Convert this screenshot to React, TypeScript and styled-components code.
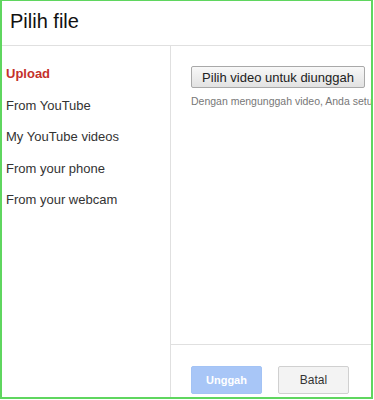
import styled, { createGlobalStyle } from "styled-components";

const GlobalStyle = createGlobalStyle`
  html, body {
    margin: 0;
    padding: 0;
    background: #fff;
  }
  body {
    font-family: "Liberation Sans", Arial, sans-serif;
  }
`;

const sources = [
  "Upload",
  "From YouTube",
  "My YouTube videos",
  "From your phone",
  "From your webcam",
];

export default function App() {
  return (
    <>
      <GlobalStyle />
      <Frame>
        <Header>
          <Title>Pilih file</Title>
        </Header>
        <Body>
          <Sidebar>
            {sources.map((s, i) => (
              <NavItem key={s} $active={i === 0}>
                {s}
              </NavItem>
            ))}
          </Sidebar>
          <Main>
            <Content>
              <PickButton>Pilih video untuk diunggah</PickButton>
              <Note>Dengan mengunggah video, Anda setuju</Note>
            </Content>
            <Footer>
              <UploadBtn disabled>Unggah</UploadBtn>
              <CancelBtn>Batal</CancelBtn>
            </Footer>
          </Main>
        </Body>
      </Frame>
    </>
  );
}

const Frame = styled.div`
  box-sizing: border-box;
  width: 373px;
  height: 399px;
  border: 2px solid #5fd65f;
  border-top-width: 1px;
  display: flex;
  flex-direction: column;
  overflow: hidden;
`;

const Header = styled.div`
  height: 44px;
  border-bottom: 1px solid #e0e0e0;
  padding-left: 8px;
  display: flex;
  align-items: center;
`;

const Title = styled.div`
  font-size: 20px;
  color: #111;
  margin-top: -3px;
`;

const Body = styled.div`
  flex: 1;
  display: flex;
  min-height: 0;
`;

const Sidebar = styled.div`
  width: 168px;
  border-right: 1px solid #e0e0e0;
  padding-top: 12px;
  box-sizing: content-box;
`;

const NavItem = styled.div<{ $active?: boolean }>`
  height: 31.5px;
  line-height: 31.5px;
  padding-left: 4px;
  font-size: 13px;
  color: ${(p) => (p.$active ? "#c4302b" : "#333")};
  font-weight: ${(p) => (p.$active ? 700 : 400)};
`;

const Main = styled.div`
  flex: 1;
  display: flex;
  flex-direction: column;
  overflow: hidden;
`;

const Content = styled.div`
  flex: 1;
  padding: 20px 0 0 20px;
  white-space: nowrap;
`;

const PickButton = styled.button`
  font-family: "Liberation Sans", Arial, sans-serif;
  font-size: 13px;
  color: #222;
  height: 22px;
  width: 174px;
  padding: 0;
  border: 1px solid #a9a9a9;
  border-radius: 2px;
  background: linear-gradient(#f8f8f8, #e2e2e2);
`;

const Note = styled.div`
  margin-top: 7px;
  font-size: 10.5px;
  color: #777;
`;

const Footer = styled.div`
  height: 53px;
  border-top: 1px solid #e0e0e0;
  display: flex;
  align-items: flex-start;
  gap: 16px;
  padding: 21px 0 0 20px;
  box-sizing: border-box;
`;

const UploadBtn = styled.button`
  width: 71px;
  height: 28px;
  border: 1px solid #a3c3f5;
  border-radius: 2px;
  background: #a8c6f7;
  color: #fff;
  font-family: "Liberation Sans", Arial, sans-serif;
  font-size: 11px;
  font-weight: 700;
  padding: 0;
`;

const CancelBtn = styled.button`
  width: 71px;
  height: 28px;
  border: 1px solid #d0d0d0;
  border-radius: 2px;
  background: #f3f3f3;
  color: #333;
  font-family: "Liberation Sans", Arial, sans-serif;
  font-size: 12px;
  padding: 0;
`;
